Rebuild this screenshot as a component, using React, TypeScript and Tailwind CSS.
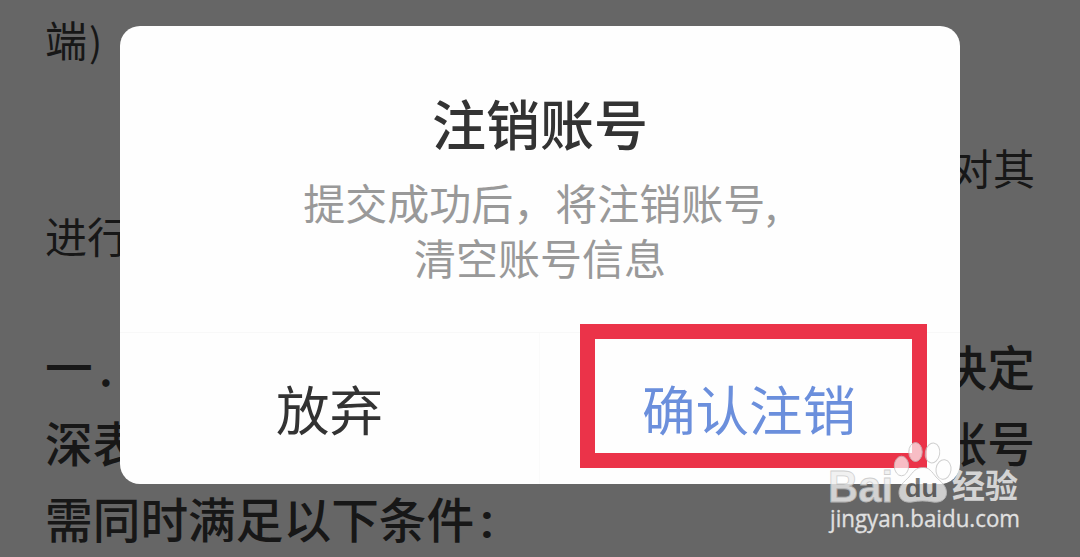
import * as React from "react"

const Watermark: React.FC = () => {
  return (
    <div className="absolute left-[826px] top-[438px] w-[200px] h-[96px] opacity-80">
      <svg width="200" height="96" viewBox="0 0 200 96">
        <g fill="#ffffff" fillOpacity="0.85" stroke="#c4c4c4" strokeWidth="1">
          <ellipse cx="75.500" cy="28" rx="7.200" ry="9.800" />
          <ellipse cx="89.500" cy="14" rx="6.700" ry="9.500" />
          <ellipse cx="106.500" cy="15" rx="7.200" ry="10" transform="rotate(10 106.500 15)" />
          <ellipse cx="117.500" cy="31.500" rx="7.500" ry="9.800" transform="rotate(8 117.500 31.500)" />
          <path d="M96.500 29.500 C103 29 106 34 110 39 C115 44 121 48 120.500 55.500 C120 62 114 65 107 64 C100 62.500 93 62.500 86 64 C79 65 73.500 62 73 55.500 C72.500 48 78 44 83 39 C87 34 90 29.500 96.500 29.500 Z" />
        </g>
        <g fontFamily='"Liberation Sans", Arial, sans-serif' fontWeight="700">
          <text x="2" y="63.500" fontSize="45" textLength="65" lengthAdjust="spacingAndGlyphs" fill="#eeeeee" stroke="#c4c4c4" strokeWidth="0.800">Bai</text>
          <text x="79" y="59" fontSize="25" textLength="33" lengthAdjust="spacingAndGlyphs" fill="#5c5c5c">du</text>
        </g>
        <text x="126" y="60" fontSize="33" textLength="66" fontFamily='"Noto Sans CJK SC", sans-serif' fontWeight="700" fill="#f0f0f0">经验</text>
        <text x="4" y="89" fontSize="23" textLength="190" lengthAdjust="spacingAndGlyphs" fontFamily='"Open Sans", sans-serif' fontWeight="500" fill="#ffffff" stroke="#ffffff" strokeWidth="0.300">jingyan.baidu.com</text>
      </svg>
    </div>
  )
}

const Agreement: React.FC = () => {
  return (
    <div className="w-full h-full pl-[45px] pr-[45px] pt-[7px] text-[42px] text-[#171717]">
      <div className="h-[64px] leading-[64px]">端<span className="ml-0.5 text-[39px]">)</span></div>
      <div className="h-[64px]"></div>
      <div className="h-[64px] leading-[64px] text-right">对其</div>
      <div className="h-[72px] leading-[72px]">进行</div>
      <div className="flex flex-col mt-[57px] text-[47.700px] leading-[76px] font-medium">
        <div className="flex justify-between">
          <span>一<span className="ml-1.5">.</span></span>
          <span>决定</span>
        </div>
        <div className="flex justify-between">
          <span>深表</span>
          <span>账号</span>
        </div>
        <div>需同时满足以下条件<span className="font-['Roboto'] font-bold ml-1.5">:</span></div>
      </div>
    </div>
  )
}

const Dialog: React.FC = () => {
  return (
    <div className="absolute left-[120px] top-[26px] w-[840px] h-[458px] bg-[#fefefe] rounded-[20px] flex flex-col">
      <div className="h-[307px] flex flex-col items-center pt-[62px] border-b border-[#f8f8f8]">
        <h1 className="text-[54px] leading-[70px] font-medium text-[#333333]">注销账号</h1>
        <p className="mt-[16px] text-[42px] leading-[55px] text-center text-[#999999]">
          提交成功后，将注销账号,
          <br />
          清空账号信息
        </p>
      </div>
      <div className="flex flex-1 text-[53.500px]">
        <button className="w-[420px] h-full border-r border-[#fafafa] text-[#333333]">放弃</button>
        <button className="flex-1 h-full pr-0.5 text-[#6b8fdc]">确认注销</button>
      </div>
    </div>
  )
}

const App: React.FC = () => {
  return (
    <main className="relative w-[1080px] h-[557px] overflow-hidden bg-[#666666] font-['Noto_Sans_CJK_SC',sans-serif]">
      <Agreement />
      <Dialog />
      <div className="absolute left-[580px] top-[324px] w-[347px] h-[144px] border-[15px] border-[#eb3349]"></div>
      <Watermark />
    </main>
  )
}

export default App
